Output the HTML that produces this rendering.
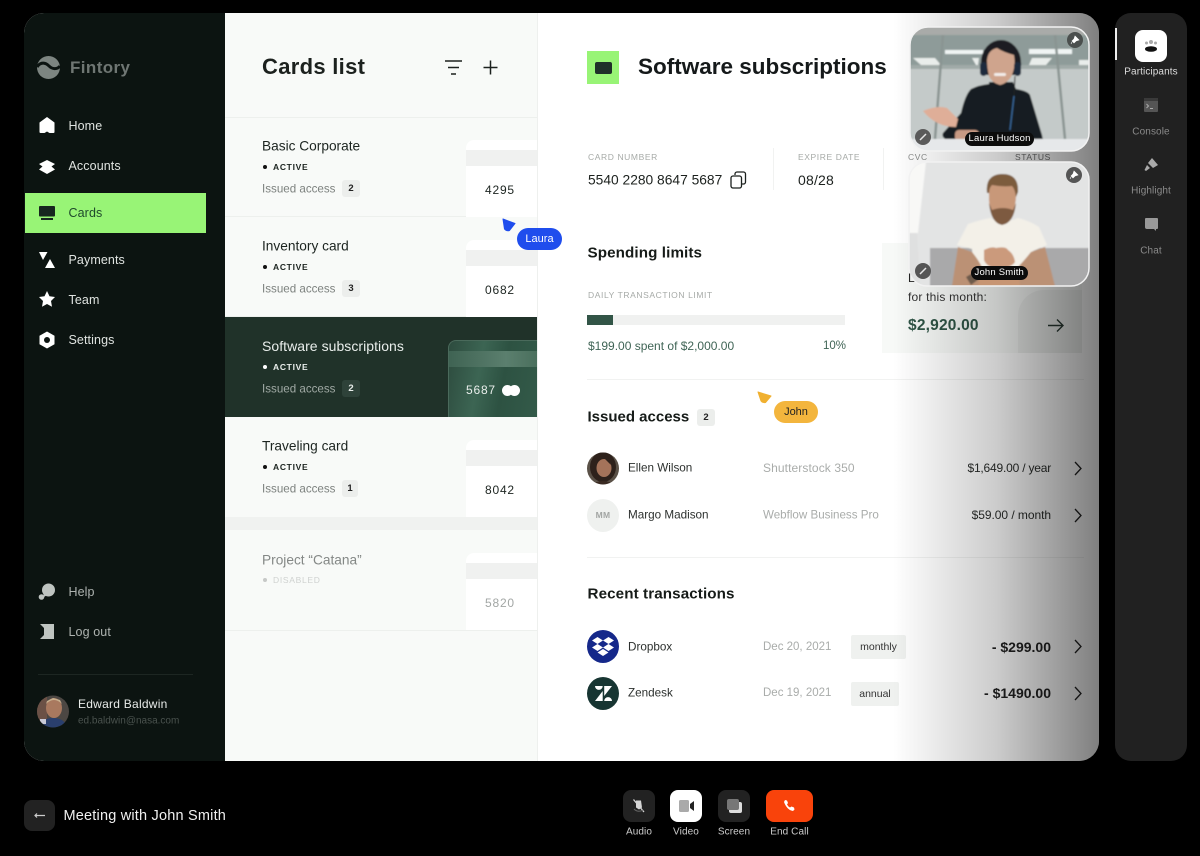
<!DOCTYPE html>
<html><head><meta charset="utf-8"><style>
*{box-sizing:border-box;margin:0;padding:0}
html,body{width:1200px;height:856px;background:#000;overflow:hidden;font-family:"Liberation Sans",sans-serif}
.a{position:absolute}
.t{position:absolute;white-space:nowrap;transform:translateY(-50%);letter-spacing:.25px}
.nav{font-size:12.5px;color:#dfe3e0;left:68.5px;letter-spacing:.1px}
.row{left:225px;width:312px;height:100px;border-bottom:1px solid #edf0ed}
.ti{font-size:13.7px;left:262px;color:#1c2420;letter-spacing:0}
.st{font-size:8.5px;font-weight:bold;letter-spacing:.7px;left:273px;color:#1c2420}
.dot{width:4px;height:4px;border-radius:50%;left:263px;background:#111}
.ia{font-size:11.6px;left:262px;color:#7c817e;letter-spacing:0}
.bd{left:342px;width:18px;height:17px;border-radius:3px;background:#eceeec;font-size:9.5px;font-weight:bold;text-align:center;line-height:17px;color:#222}
.card{left:466px;width:71px;height:77px;background:#fff;border-radius:8px 0 0 0}
.strip{left:0;top:10px;width:100%;height:16px;background:#f0f1f0}
.num{font-size:12px;left:485px;letter-spacing:.8px;color:#1c2420}
.lb{font-size:8.5px;letter-spacing:.6px;color:#a6aaa7}
.h2{font-size:15.2px;font-weight:bold;color:#161b18;letter-spacing:.1px}
.nm{font-size:11.7px;left:628px;color:#2c302e;letter-spacing:0}
.mu{font-size:11.5px;left:763px;color:#a9acaa;letter-spacing:0}
.rt{right:149px;font-size:12px;color:#2a2d2b;letter-spacing:-.2px}
.amt{right:149px;font-size:14px;font-weight:bold;color:#222;letter-spacing:0}
.tag{left:851px;height:24px;background:#eff1ef;border-radius:2px;font-size:10.5px;line-height:24px;text-align:center;color:#333}
.ci{left:587px;width:32px;height:33px;border-radius:50%}
.vb{width:32px;height:32px;border-radius:8px;background:#222}
.cl{font-size:10px;color:#ccc;text-align:center;letter-spacing:.1px}
.rl{font-size:10px;text-align:center;left:1115px;width:72px;color:#8a8a8a;letter-spacing:.1px}
.vn{background:#0c0c0c;color:#fff;font-size:9.5px;height:14px;line-height:14px;border-radius:7px;padding:0 3.5px;letter-spacing:.2px}
.pin{width:16px;height:16px;border-radius:50%;background:#555}
</style></head><body>

<div class="a" style="left:24px;top:13px;width:1075px;height:748px;border-radius:20px;overflow:hidden;background:#fff">
<div class="a" style="left:0;top:0;width:201px;height:748px;background:#0c1411"></div>
<div class="a" style="left:201px;top:0;width:313px;height:748px;background:#f8faf8;border-right:1px solid #eef0ee"></div>
</div>

<!-- logo -->
<svg class="a" style="left:37px;top:55px" width="24" height="25" viewBox="0 0 24 25"><circle cx="11.5" cy="12.5" r="11.5" fill="#7d8581"/><path d="M0 12C4 6 9 8 12 11s8 4 11 0" fill="none" stroke="#0c1411" stroke-width="3"/></svg>
<div class="t" style="left:70px;top:68px;font-size:17px;font-weight:bold;color:#6f7673;letter-spacing:.4px">Fintory</div>

<!-- nav icons -->
<svg class="a" style="left:38px;top:116px" width="18" height="18" viewBox="0 0 18 18"><path d="M1.5 6.5 9 1l7.500 5.500V16a1 1 0 0 1-1 1H11.500L9 15.500 6.500 17h-4a1 1 0 0 1-1-1z" fill="#fff"/></svg>
<div class="t nav" style="top:126px">Home</div>
<svg class="a" style="left:38px;top:160px" width="18" height="14" viewBox="0 0 18 14"><path d="M9 0L17 4 13.500 6.500 17 9.500 9 14 1 9.500 4.500 6.500 1 4z" fill="#fff"/></svg>
<div class="t nav" style="top:166px">Accounts</div>
<div class="a" style="left:25px;top:193px;width:181px;height:40px;background:#98f476"></div>
<svg class="a" style="left:38px;top:205px" width="18" height="16" viewBox="0 0 18 16"><rect x="1" y="1" width="16" height="10.500" rx="1" fill="#17261f"/><rect x="3" y="13" width="12" height="2" fill="#17261f"/></svg>
<div class="t nav" style="top:213px;color:#1f4a2c">Cards</div>
<svg class="a" style="left:38px;top:251px" width="18" height="18" viewBox="0 0 18 18"><path d="M1 1h8.500L5 9zM12 8l5 9H7z" fill="#fff"/></svg>
<div class="t nav" style="top:260px">Payments</div>
<svg class="a" style="left:38px;top:290px" width="18" height="18" viewBox="0 0 18 18"><path d="M9 1l2.500 5.300 5.500.7-4 4 1 5.700L9 14l-5 2.700 1-5.700-4-4 5.500-.7z" fill="#fff"/></svg>
<div class="t nav" style="top:300px">Team</div>
<svg class="a" style="left:38px;top:331px" width="18" height="18" viewBox="0 0 18 18"><path d="M9 .5l7.500 4.200v8.600L9 17.500l-7.500-4.200V4.700z" fill="#fff"/><circle cx="9" cy="9" r="3" fill="#0c1411"/></svg>
<div class="t nav" style="top:340px">Settings</div>

<svg class="a" style="left:38px;top:583px" width="18" height="18" viewBox="0 0 18 18"><circle cx="10.500" cy="7" r="6.500" fill="#bfc4c1"/><path d="M5 9l4 3-3 2z" fill="#bfc4c1"/><circle cx="3.500" cy="14" r="2.800" fill="#bfc4c1"/></svg>
<div class="t nav" style="top:592px;color:#aeb3b0">Help</div>
<svg class="a" style="left:39px;top:624px" width="16" height="15" viewBox="0 0 16 15"><path d="M1 0h14v15H1l4-4V4z" fill="#bfc4c1"/></svg>
<div class="t nav" style="top:632px;color:#aeb3b0">Log out</div>
<div class="a" style="left:38px;top:674px;width:155px;height:1px;background:#1d2622"></div>

<svg class="a" style="left:37px;top:695px" width="32" height="33" viewBox="0 0 32 33"><defs><clipPath id="ed"><circle cx="16" cy="16.500" r="16"/></clipPath></defs><g clip-path="url(#ed)"><rect width="32" height="33" fill="#4c4743"/><rect x="0" y="0" width="10" height="33" fill="#6b5146"/><ellipse cx="17" cy="13" rx="8" ry="10" fill="#a9795f"/><path d="M9 9q8-8 16 0l-2-4-7-2-6 3z" fill="#c8b08f"/><path d="M2 33q2-10 14-10t14 10z" fill="#2a3f6d"/><rect x="3" y="24" width="6" height="5" fill="#c9c9d6"/></g></svg>
<div class="t" style="left:78px;top:704px;font-size:12px;color:#e8ebe9">Edward Baldwin</div>
<div class="t" style="left:78px;top:721px;font-size:10px;color:#4a524e;letter-spacing:0">ed.baldwin@nasa.com</div>

<!-- list -->
<div class="t" style="left:262px;top:67px;font-size:22px;font-weight:bold;color:#1c211e;letter-spacing:.3px">Cards list</div>
<svg class="a" style="left:444px;top:59px" width="19" height="17" viewBox="0 0 19 17" fill="none" stroke="#1c211e" stroke-width="1.500"><path d="M1 2h17M4 8.500h11M7 15h5"/></svg>
<svg class="a" style="left:482px;top:59px" width="17" height="17" viewBox="0 0 17 17" fill="none" stroke="#1c211e" stroke-width="1.500"><path d="M8.500 1.500v14M1.500 8.500h14"/></svg>

<div class="a" style="left:225px;top:117px;width:312px;height:1px;background:#edf0ed"></div>
<div class="a row" style="top:117px;height:100px"></div>
<div class="a row" style="top:217px"></div>
<div class="a" style="left:225px;top:317px;width:312px;height:100px;background:#203229"></div>
<div class="a" style="left:225px;top:517px;width:312px;height:13px;background:#f0f2f0"></div>
<div class="a" style="left:225px;top:630px;width:312px;height:1px;background:#edf0ed"></div>

<div class="t ti" style="top:145.500px">Basic Corporate</div><div class="a dot" style="top:164.500px"></div><div class="t st" style="top:166.500px">ACTIVE</div><div class="t ia" style="top:188.500px">Issued access</div><div class="a bd" style="top:180px">2</div>
<div class="a card" style="top:140px"><div class="a strip"></div></div><div class="t num" style="top:190px">4295</div>

<div class="t ti" style="top:245.500px">Inventory card</div><div class="a dot" style="top:264.500px"></div><div class="t st" style="top:266.500px">ACTIVE</div><div class="t ia" style="top:288.500px">Issued access</div><div class="a bd" style="top:280px">3</div>
<div class="a card" style="top:240px"><div class="a strip"></div></div><div class="t num" style="top:290px">0682</div>

<div class="t ti" style="top:345.500px;color:#e9eeeb;font-size:14px;letter-spacing:.05px">Software subscriptions</div><div class="a dot" style="top:364.500px;background:#fff"></div><div class="t st" style="top:366.500px;color:#e9eeeb">ACTIVE</div><div class="t ia" style="top:388.500px;color:#a1aaa5">Issued access</div><div class="a bd" style="top:380px;background:#2e4239;color:#e9eeeb">2</div>
<div class="a" style="left:448px;top:340px;width:89px;height:77px;border-radius:8px 0 0 0;background:linear-gradient(100deg,#2d4b3e 0,#3c6553 35%,#2d5242 60%,#335a49 100%);border:1px solid #4a6a5b;border-width:1px 0 0 1px"><div class="a" style="left:0;top:10px;width:100%;height:16px;background:linear-gradient(90deg,#3f6353,#5b7f6e 65%,#4a6f5d)"></div></div>
<div class="t num" style="left:466px;top:390px;color:#e9eeeb">5687</div>
<div class="a" style="left:502px;top:385px;width:11px;height:11px;border-radius:50%;background:#fff"></div><div class="a" style="left:509px;top:385px;width:11px;height:11px;border-radius:50%;background:#fff"></div>

<div class="t ti" style="top:445.500px">Traveling card</div><div class="a dot" style="top:464.500px"></div><div class="t st" style="top:466.500px">ACTIVE</div><div class="t ia" style="top:488.500px">Issued access</div><div class="a bd" style="top:480px;width:16px">1</div>
<div class="a card" style="top:440px"><div class="a strip"></div></div><div class="t num" style="top:490px">8042</div>

<div class="t ti" style="top:559.500px;color:#848886">Project “Catana”</div><div class="a dot" style="top:578px;background:#c6c9c7"></div><div class="t st" style="top:580px;color:#cfd2d0;font-weight:normal">DISABLED</div>
<div class="a card" style="top:553px"><div class="a strip"></div></div><div class="t num" style="top:603px;color:#a2a6a4">5820</div>

<!-- Detail -->
<div class="a" style="left:587px;top:51px;width:32px;height:33px;background:#98f476"></div>
<div class="a" style="left:595px;top:62px;width:17px;height:12px;border-radius:2px;background:#1f3029"></div>
<div class="t" style="left:638px;top:67px;font-size:22.5px;font-weight:bold;color:#15191a;letter-spacing:0">Software subscriptions</div>

<div class="t lb" style="left:588px;top:157px">CARD NUMBER</div>
<div class="t" style="left:588px;top:180px;font-size:13.8px;color:#1c211e;letter-spacing:0">5540 2280 8647 5687</div>
<svg class="a" style="left:730px;top:171px" width="17" height="18" viewBox="0 0 17 18" fill="none" stroke="#1c211e" stroke-width="1.300"><rect x="1" y="5" width="10.500" height="12" rx="2"/><path d="M5 4V3a2 2 0 0 1 2-2h6.500a2 2 0 0 1 2 2v8a2 2 0 0 1-2 2h-2"/></svg>
<div class="a" style="left:773px;top:148px;width:1px;height:42px;background:#f1f2f1"></div>
<div class="t lb" style="left:798px;top:157px">EXPIRE DATE</div>
<div class="t" style="left:798px;top:180px;font-size:14px;color:#1c211e;letter-spacing:.2px">08/28</div>
<div class="a" style="left:883px;top:148px;width:1px;height:42px;background:#f1f2f1"></div>
<div class="t lb" style="left:908px;top:157px;color:#8a8c8b">CVC</div>
<div class="t lb" style="left:1015px;top:157px;color:#6d6e6e">STATUS</div>

<div class="t h2" style="left:587.500px;top:253px">Spending limits</div>
<div class="t lb" style="left:588px;top:295px">DAILY TRANSACTION LIMIT</div>
<div class="a" style="left:587px;top:315px;width:258px;height:10px;background:#f0f1f0"></div>
<div class="a" style="left:587px;top:315px;width:26px;height:10px;background:#325547"></div>
<div class="t" style="left:588px;top:346px;font-size:12px;color:#3f6455;letter-spacing:0">$199.00 spent of $2,000.00</div>
<div class="t" style="left:823px;top:346px;font-size:11.500px;color:#3f6455;letter-spacing:0">10%</div>

<div class="a" style="left:882px;top:243px;width:200px;height:110px;background:#f7f9f7"></div>
<div class="a" style="left:1018px;top:290px;width:64px;height:63px;border-radius:26px 0 0 0;background:#eef0ee"></div>
<div class="t" style="left:908px;top:297px;font-size:12px;color:#333;letter-spacing:.2px">for this month:</div>
<div class="t" style="left:908px;top:326px;font-size:15.500px;font-weight:bold;color:#2f5546;letter-spacing:.2px">$2,920.00</div>
<svg class="a" style="left:1047px;top:318px" width="18" height="15" viewBox="0 0 18 15" fill="none" stroke="#2a3a33" stroke-width="1.400"><path d="M1 7.500h15M10 1.500l6 6-6 6"/></svg>
<div class="a" style="left:587px;top:379px;width:497px;height:1px;background:#f1f2f1"></div>

<div class="t h2" style="left:587.500px;top:416.500px;font-size:15px;letter-spacing:0">Issued access</div>
<div class="a bd" style="left:697px;top:409px;font-size:9.500px">2</div>

<svg class="a" style="left:587px;top:452px" width="32" height="33" viewBox="0 0 32 33"><defs><clipPath id="el"><circle cx="16" cy="16.500" r="16"/></clipPath></defs><g clip-path="url(#el)"><rect width="32" height="33" fill="#5a5147"/><ellipse cx="16" cy="15" rx="13" ry="15" fill="#2d211b"/><ellipse cx="17" cy="16" rx="7.500" ry="9" fill="#a4735a"/><path d="M9 13q3-7 9-6l6 6-3-8-8-1z" fill="#2d211b"/><path d="M4 33q12-8 24 0z" fill="#3a2a22"/></g></svg>
<div class="t nm" style="top:468px">Ellen Wilson</div>
<div class="t mu" style="top:468px;font-size:12px;letter-spacing:.1px">Shutterstock 350</div>
<div class="t rt" style="top:468px">$1,649.00 / year</div>
<div class="a ci" style="top:499px;background:#eff1ef;font-size:8.500px;font-weight:bold;line-height:33px;text-align:center;color:#a2a5a3;letter-spacing:.3px">MM</div>
<div class="t nm" style="top:515px">Margo Madison</div>
<div class="t mu" style="top:515px;font-size:11.600px">Webflow Business Pro</div>
<div class="t rt" style="top:515px;letter-spacing:-.05px">$59.00 / month</div>
<div class="a" style="left:587px;top:557px;width:497px;height:1px;background:#f1f2f1"></div>

<div class="t h2" style="left:587.500px;top:594px">Recent transactions</div>
<div class="a ci" style="top:630px;background:#15288a"></div>
<svg class="a" style="left:592px;top:636px" width="22" height="21" viewBox="0 0 22 21" fill="#fff"><path d="M5.500 1L11 4.500 5.500 8 0 4.500zM16.500 1L22 4.500 16.500 8 11 4.500zM5.500 8L11 11.500 5.500 15 0 11.500zM16.500 8L22 11.500 16.500 15 11 11.500zM11 13l5.500 3.500L11 20l-5.500-3.500z"/></svg>
<div class="t nm" style="top:647px">Dropbox</div>
<div class="t mu" style="top:647px">Dec 20, 2021</div>
<div class="a tag" style="top:635px;width:55px">monthly</div>
<div class="t amt" style="top:647px">- $299.00</div>
<div class="a ci" style="top:677px;background:#173532"></div>
<svg class="a" style="left:595px;top:686px" width="17" height="15" viewBox="0 0 17 15" fill="#fff"><path d="M0 0h7.700a3.850 3.850 0 0 1-7.700 0zM7.700 5v10H0zM9.200 0H17L9.200 10zM9.200 15a3.900 3.900 0 0 1 7.800 0z"/></svg>
<div class="t nm" style="top:693px">Zendesk</div>
<div class="t mu" style="top:693px">Dec 19, 2021</div>
<div class="a tag" style="top:682px;width:48px">annual</div>
<div class="t amt" style="top:693px">- $1490.00</div>

<svg class="a" style="left:1073px;top:461px" width="10" height="240" viewBox="0 0 10 240" fill="none" stroke="#222" stroke-width="1.300"><path d="M2 1l6 6.500-6 6.500M2 48l6 6.500-6 6.500M2 179l6 6.500-6 6.500M2 226l6 6.500-6 6.500"/></svg>

<!-- cursors -->
<svg class="a" style="left:502px;top:218px" width="14" height="15" viewBox="0 0 14 15"><path d="M1 1l12 4.500-5.500 7q-3 1-5-1.500z" fill="#1f4ded" stroke="#1f4ded" stroke-linejoin="round"/></svg>
<div class="a" style="left:517px;top:228px;width:45px;height:22px;border-radius:11px;background:#1f4ded;color:#fff;font-size:11px;line-height:22px;text-align:center">Laura</div>
<svg class="a" style="left:757px;top:391px" width="16" height="15" viewBox="0 0 16 15"><path d="M1 1l13 4-5.500 6.500q-3 .5-4.500-1.500z" fill="#f0b030" stroke="#f0b030" stroke-linejoin="round"/></svg>
<div class="a" style="left:774px;top:401px;width:44px;height:22px;border-radius:11px;background:#f3b53d;color:#222;font-size:11px;line-height:22px;text-align:center">John</div>

<!-- overlay -->
<div class="a" style="left:893px;top:13px;width:206px;height:748px;border-radius:0 20px 20px 0;background:linear-gradient(90deg,rgba(0,0,0,0) 0,rgba(0,0,0,.2) 50%,rgba(0,0,0,.5) 100%)"></div>

<!-- Videos -->
<svg class="a" style="left:909px;top:26px" width="181" height="126" viewBox="0 0 181 126"><defs><clipPath id="v1"><rect x="1" y="1" width="179" height="124" rx="18"/></clipPath><filter id="b1"><feGaussianBlur stdDeviation=".7"/></filter></defs><g clip-path="url(#v1)"><g filter="url(#b1)">
<rect width="181" height="126" fill="#c4cac9"/>
<rect width="181" height="9" fill="#a9aba9"/>
<rect y="9" width="181" height="30" fill="#8e9b99"/>
<rect x="36" y="24" width="38" height="4" fill="#f0f4f4"/><rect x="120" y="23" width="43" height="5" fill="#f0f4f4"/>
<path d="M4 32h22l6 7H12zM63 32h7l-1 7h-2zM123 32h20l-6 7h-17zM170 34h10v5h-10z" fill="#e9edeb"/>
<rect y="39" width="181" height="4" fill="#a0aaa8"/>
<path d="M34 9l-8 104M146 9l10 104" stroke="#8a9492" stroke-width="2.500" fill="none"/>
<path d="M80 56h24l3 7q12 2 14 6l12 40 1 5H38q-6-3-4-7l18-20q4-18 10-24 8-4 18-5z" fill="#141f20"/>
<path d="M72 36a20 22 0 0 1 40 0q1 8-4 13h-32q-5-5-4-13z" fill="#1a1e24"/>
<path d="M78 34q1-10 10-12 6 4 17 7 2 12-3 22-5 7-11 8-8-2-11-9-2-8-2-16z" fill="#cfa48d"/>
<rect x="71" y="36" width="7" height="14" rx="3.500" fill="#1c2a3c"/><rect x="105" y="36" width="7" height="14" rx="3.500" fill="#1c2a3c"/>
<rect x="85" y="47" width="12" height="3" rx="1.500" fill="#f2ece8"/>
<path d="M106 50l-1 20" stroke="#222" fill="none"/><path d="M105 70l-4 34" stroke="#3a6aa0" stroke-width="1.200" fill="none"/>
<path d="M14 85q14-6 24-3l11 11-2 8q-20 0-33-16z" fill="#dfae98"/>
<rect x="46" y="104" width="24" height="12" rx="4" fill="#c89a84"/>
<rect x="0" y="113" width="181" height="13" fill="#e6e8ea"/>
</g></g><rect x="1" y="1" width="179" height="124" rx="18" fill="none" stroke="#f2f2f2" stroke-width="1.500"/></svg>
<svg class="a" style="left:908px;top:161px" width="182" height="126" viewBox="0 0 182 126"><defs><clipPath id="v2"><rect x="1" y="1" width="180" height="124" rx="18"/></clipPath><filter id="b2"><feGaussianBlur stdDeviation=".7"/></filter></defs><g clip-path="url(#v2)"><g filter="url(#b2)">
<rect width="182" height="126" fill="#e3e4e4"/>
<path d="M1 1h17L10 72H1z" fill="#f8f8f6"/><path d="M1 72h8l3 50H1z" fill="#dfe0e0"/>
<rect x="22" y="87" width="160" height="39" fill="#a9a9aa"/>
<path d="M60 63q12-4 22-6 12 7 28 0 12 3 21 9l8 18-14 6-2 30H66l-2-32-15-4z" fill="#f3f0e8"/>
<path d="M50 86l14 5q8 10 10 16l-2 18H44zM137 86l-14 5q-8 10-14 16l2 18h36z" fill="#bb9174"/>
<path d="M76 89q8-4 12-2 10-2 12 2 6 4 7 12-4 6-16 6t-15-8z" fill="#cb9a7b"/>
<path d="M74 107h36l2 18H70z" fill="#c79573"/>
<path d="M81 34q-2-18 13-18t14 18q0 20-14 28-14-8-13-28z" fill="#c89879"/>
<path d="M79 32q-2-18 14-19 18-1 17 18l-2 5q-1-8-4-11-10 1-20-1-3 3-3 8z" fill="#7c5c3d"/>
<path d="M81 42q2 20 13 22 12-2 14-22l-3 7q-10-4-21 0z" fill="#7d5a3f"/>
<path d="M58 116l10-6 3 8-8 6z" fill="#6d5a4c"/>
</g></g><rect x="1" y="1" width="180" height="124" rx="18" fill="none" stroke="#f2f2f2" stroke-width="1.500"/></svg>
<div class="t" style="left:908px;top:278px;font-size:12px;color:#222">L</div>
<div class="a pin" style="left:1067px;top:32px;background:#4b4f4e"></div>
<svg class="a" style="left:1070px;top:35px" width="10" height="10" viewBox="0 0 10 10"><path d="M5 1l4 4-3 1-2 2-2-2 2-2zM2 7L1 9" fill="#fff" stroke="#fff" stroke-width=".6"/></svg>
<div class="a pin" style="left:915px;top:129px;background:#5a5a5a"></div>
<svg class="a" style="left:918px;top:132px" width="10" height="10" viewBox="0 0 10 10" stroke="#e5e5e5" fill="none"><path d="M2 8l6-6" stroke-width="1.500"/></svg>
<div class="a pin" style="left:1066px;top:167px"></div>
<svg class="a" style="left:1069px;top:170px" width="10" height="10" viewBox="0 0 10 10"><path d="M5 1l4 4-3 1-2 2-2-2 2-2zM2 7L1 9" fill="#fff" stroke="#fff" stroke-width=".6"/></svg>
<div class="a pin" style="left:915px;top:263px"></div>
<svg class="a" style="left:918px;top:266px" width="10" height="10" viewBox="0 0 10 10" stroke="#e5e5e5" fill="none"><path d="M2 8l6-6" stroke-width="1.500"/></svg>
<div class="a vn" style="left:965px;top:132px">Laura Hudson</div>
<div class="a vn" style="left:971px;top:266px">John Smith</div>

<!-- Right panel -->
<div class="a" style="left:1115px;top:13px;width:72px;height:748px;border-radius:16px;background:#212121"></div>
<div class="a" style="left:1115px;top:28px;width:2px;height:32px;background:#eee"></div>
<div class="a" style="left:1135px;top:30px;width:32px;height:32px;border-radius:8px;background:#fff"></div>
<svg class="a" style="left:1143px;top:38px" width="16" height="16" viewBox="0 0 16 16"><circle cx="8" cy="4" r="2" fill="#aaa"/><circle cx="3.500" cy="5" r="1.500" fill="#aaa"/><circle cx="12.500" cy="5" r="1.500" fill="#aaa"/><ellipse cx="8" cy="11" rx="6" ry="2.800" fill="#111"/></svg>
<div class="t rl" style="top:72px;color:#ddd">Participants</div>
<svg class="a" style="left:1144px;top:98px" width="14" height="14" viewBox="0 0 14 14"><rect width="14" height="14" rx="1" fill="#555"/><rect y="0" width="14" height="3" fill="#3a3a3a"/><path d="M2.500 6l2 2-2 2M6 10.500h3" stroke="#aaa" fill="none"/></svg>
<div class="t rl" style="top:132px">Console</div>
<svg class="a" style="left:1144px;top:157px" width="15" height="16" viewBox="0 0 15 16"><path d="M8 1l6 7-5 3-5-5zM3 8l3 3-4 3-1.500-1z" fill="#aaa"/></svg>
<div class="t rl" style="top:191px">Highlight</div>
<svg class="a" style="left:1144px;top:217px" width="15" height="15" viewBox="0 0 15 15"><path d="M2 1h11a1 1 0 0 1 1 1v9a1 1 0 0 1-1 1h-1v2l-2-2H3a2 2 0 0 1-2-2V2a1 1 0 0 1 1-1z" fill="#999"/></svg>
<div class="t rl" style="top:251px">Chat</div>

<!-- Bottom -->
<div class="a" style="left:24px;top:800px;width:31px;height:31px;border-radius:8px;background:#222"></div>
<svg class="a" style="left:33px;top:811px" width="13" height="9" viewBox="0 0 13 9" fill="none" stroke="#ccc" stroke-width="1.200"><path d="M12 4.500H2M4 2.500L2 4.500l2 2"/></svg>
<div class="t" style="left:63.500px;top:816px;font-size:14.500px;color:#f0f0f0;letter-spacing:.2px">Meeting with John Smith</div>

<div class="a vb" style="left:623px;top:790px"></div>
<svg class="a" style="left:631px;top:798px" width="16" height="16" viewBox="0 0 16 16"><path d="M5 2.500h5l1 7-3 2-3-2z" fill="#d5d5d5"/><path d="M2.500 1.500l10.500 12.500" stroke="#d5d5d5" stroke-width="1.300"/><path d="M3 11q4 4 9 1" stroke="#666" fill="none"/></svg>
<div class="t cl" style="left:623px;width:32px;top:832px">Audio</div>
<div class="a vb" style="left:670px;top:790px;background:#fff"></div>
<svg class="a" style="left:679px;top:800px" width="15" height="12" viewBox="0 0 15 12"><rect y="0" width="10" height="12" rx="1.500" fill="#aaa"/><path d="M11 4l4-3v10l-4-3z" fill="#222"/></svg>
<div class="t cl" style="left:670px;width:32px;top:832px">Video</div>
<div class="a vb" style="left:718px;top:790px"></div>
<svg class="a" style="left:727px;top:799px" width="15" height="14" viewBox="0 0 15 14"><rect x="2" y="3" width="13" height="11" rx="2" fill="#ddd"/><rect y="0" width="12" height="11" rx="2" fill="#777"/></svg>
<div class="t cl" style="left:716px;width:36px;top:832px">Screen</div>
<div class="a" style="left:766px;top:790px;width:47px;height:32px;border-radius:8px;background:#f9430b"></div>
<svg class="a" style="left:783px;top:799px" width="13" height="13" viewBox="0 0 13 13"><path d="M2 1l2 .5 1 2.500-1 1.500q1 2 3 3l1.500-1 2.500 1 .5 2-1.500 1.500Q4 11 1 3z" fill="#fff"/></svg>
<div class="t cl" style="left:766px;width:47px;top:832px">End Call</div>
</body></html>
